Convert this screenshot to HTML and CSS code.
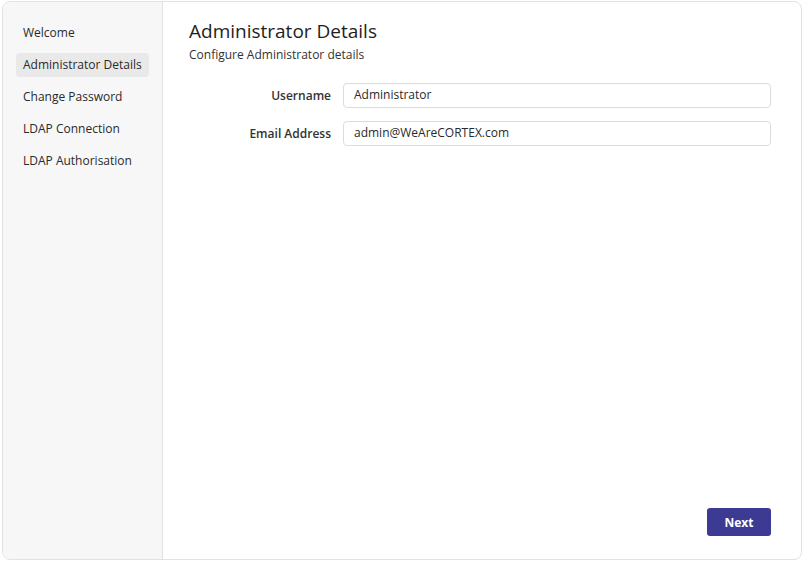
FILE: index.html
```html
<!DOCTYPE html>
<html>
<head>
<meta charset="utf-8">
<link rel="stylesheet" href="styles.css">
</head>
<body>
<div class="card">
  <nav class="sidebar">
    <div class="nav-item">Welcome</div>
    <div class="nav-item active">Administrator Details</div>
    <div class="nav-item">Change Password</div>
    <div class="nav-item">LDAP Connection</div>
    <div class="nav-item">LDAP Authorisation</div>
  </nav>
  <main class="content">
    <h1 class="title">Administrator Details</h1>
    <p class="subtitle">Configure Administrator details</p>
    <div class="form">
      <div class="row">
        <label class="label">Username</label>
        <div class="input">Administrator</div>
      </div>
      <div class="row">
        <label class="label">Email Address</label>
        <div class="input">admin@WeAreCORTEX.com</div>
      </div>
    </div>
    <div class="footer">
      <button class="btn">Next</button>
    </div>
  </main>
</div>
</body>
</html>
```
FILE: styles.css
```css
html, body {
  margin: 0;
  padding: 0;
  background: #ffffff;
}
body {
  font-family: "Open Sans", "Liberation Sans", sans-serif;
  color: #222;
  padding: 1px 3px 0 2px;
}
.card {
  display: flex;
  height: 559px;
  border: 1px solid #e2e2e2;
  border-radius: 8px;
  overflow: hidden;
  box-sizing: border-box;
}
.sidebar {
  width: 160px;
  background: #f7f7f7;
  border-right: 1px solid #e2e2e2;
  padding: 19px 13px 0 13px;
  box-sizing: border-box;
  display: flex;
  flex-direction: column;
  gap: 8px;
}
.nav-item {
  height: 24px;
  line-height: 24px;
  padding: 0 7px;
  font-size: 12px;
  color: #2a2a2a;
  border-radius: 4px;
  white-space: nowrap;
}
.nav-item.active {
  background: #e9e9e9;
}
.content {
  flex: 1;
  padding: 16px 30px 23px 26px;
  display: flex;
  flex-direction: column;
}
.title {
  margin: 0;
  font-size: 19px;
  font-weight: 500;
  line-height: 26px;
  color: #1e1e1e;
}
.subtitle {
  margin: 0;
  font-size: 12px;
  line-height: 22px;
  color: #333;
}
.form {
  margin-top: 17px;
  display: flex;
  flex-direction: column;
  gap: 13px;
}
.row {
  display: flex;
  align-items: center;
}
.label {
  width: 142px;
  text-align: right;
  padding-right: 12px;
  font-size: 12px;
  font-weight: 600;
  color: #333;
}
.input {
  flex: 1;
  height: 25px;
  box-sizing: border-box;
  border: 1px solid #dcdcdc;
  border-radius: 4px;
  padding: 0 10px;
  line-height: 21px;
  font-size: 12px;
  color: #2a2a2a;
}
.footer {
  margin-top: auto;
  display: flex;
  justify-content: flex-end;
}
.btn {
  width: 64px;
  height: 28px;
  border: none;
  border-radius: 3px;
  background: #3d3a94;
  color: #fff;
  font-family: inherit;
  font-weight: 700;
  font-size: 12px;
}
```
